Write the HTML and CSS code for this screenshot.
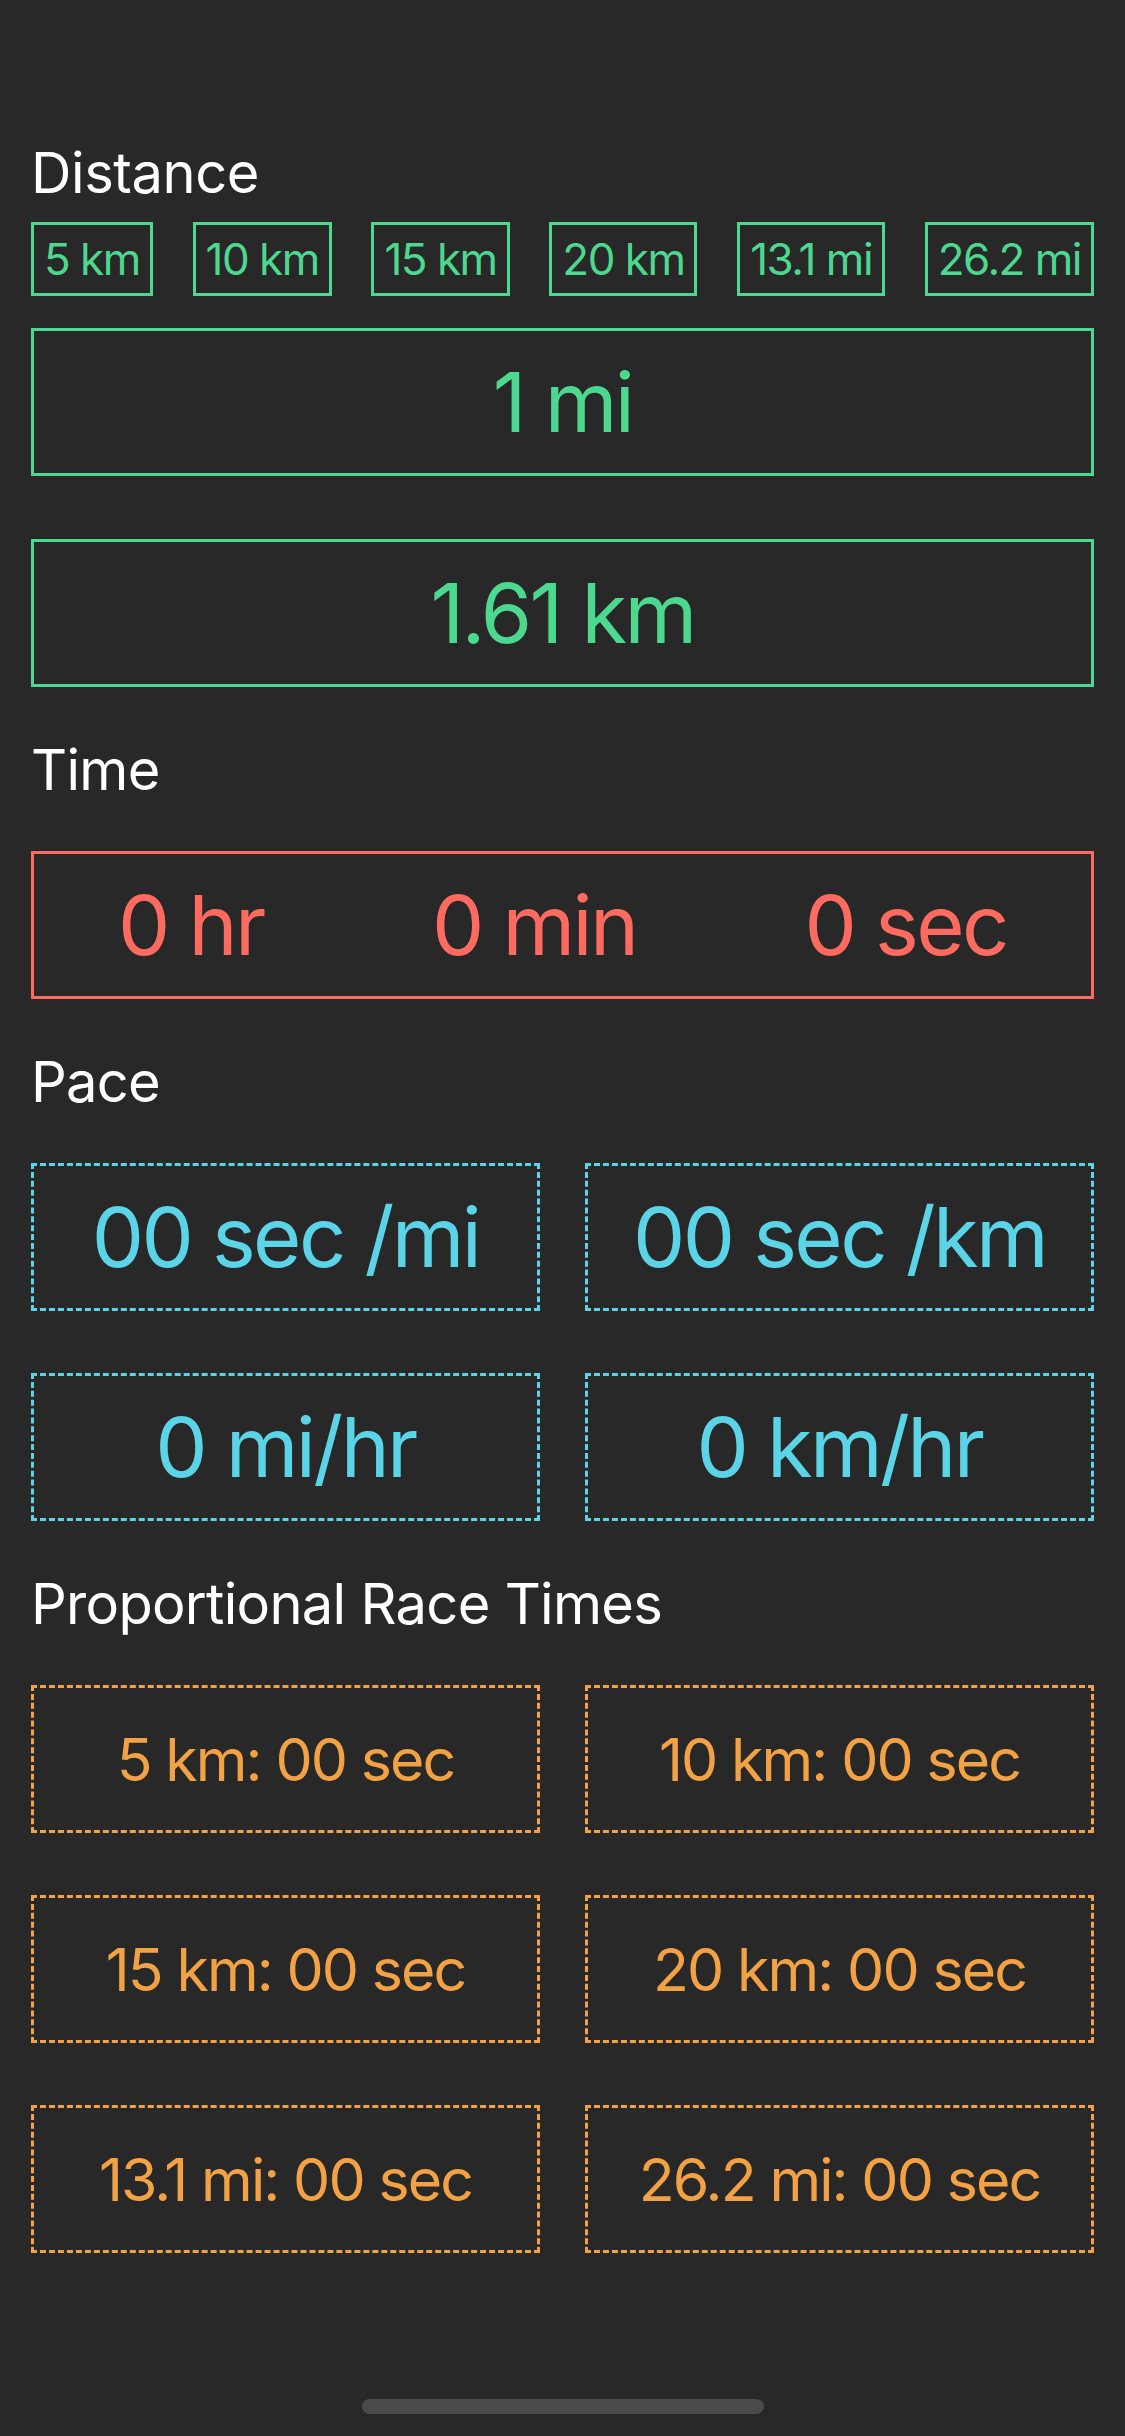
FILE: index.html
```html
<!DOCTYPE html>
<html lang="en">
<head>
<meta charset="utf-8">
<title>Pace Calculator</title>
<link rel="stylesheet" href="styles.css">
</head>
<body>
<main class="screen">
  <h2 class="label label-first">Distance</h2>
  <div class="chips">
    <div class="chip">5 km</div>
    <div class="chip">10 km</div>
    <div class="chip">15 km</div>
    <div class="chip">20 km</div>
    <div class="chip">13.1 mi</div>
    <div class="chip">26.2 mi</div>
  </div>
  <div class="stack">
    <div class="box green">1 mi</div>
    <div class="box green">1.61 km</div>
  </div>

  <h2 class="label">Time</h2>
  <div class="box red time">
    <span>0 hr</span>
    <span>0 min</span>
    <span>0 sec</span>
  </div>

  <h2 class="label">Pace</h2>
  <div class="grid">
    <div class="box dashed cyan">00 sec /mi</div>
    <div class="box dashed cyan">00 sec /km</div>
    <div class="box dashed cyan">0 mi/hr</div>
    <div class="box dashed cyan">0 km/hr</div>
  </div>

  <h2 class="label">Proportional Race Times</h2>
  <div class="grid race">
    <div class="box dashed orange">5 km: 00 sec</div>
    <div class="box dashed orange">10 km: 00 sec</div>
    <div class="box dashed orange">15 km: 00 sec</div>
    <div class="box dashed orange">20 km: 00 sec</div>
    <div class="box dashed orange">13.1 mi: 00 sec</div>
    <div class="box dashed orange">26.2 mi: 00 sec</div>
  </div>

  <div class="home-indicator"></div>
</main>
</body>
</html>
```

FILE: styles.css
```css
html, body {
  margin: 0;
  padding: 0;
  background: #282828;
}

body {
  font-family: Inter, "Noto Sans", Roboto, sans-serif;
  color: #ffffff;
  width: 1125px;
  height: 2436px;
  overflow: hidden;
}

.screen {
  display: flex;
  flex-direction: column;
  padding: 0 31px;
}

.label {
  margin: 55px 0 53px;
  font-size: 56px;
  line-height: 56px;
  font-weight: 400;
  color: #ffffff;
  letter-spacing: -0.7px;
}

.label-first {
  margin-top: 145px;
  margin-bottom: 21px;
  letter-spacing: -0.4px;
}

.chips {
  display: flex;
  justify-content: space-between;
  margin-bottom: 32px;
}

.chip {
  box-sizing: border-box;
  height: 74px;
  padding: 0 10px;
  border: 3px solid #4cd98f;
  color: #4cd98f;
  font-size: 44px;
  display: flex;
  align-items: center;
  justify-content: center;
  letter-spacing: -1.5px;
}

.stack {
  display: flex;
  flex-direction: column;
  gap: 63px;
}

.box {
  box-sizing: border-box;
  height: 148px;
  border: 3px solid currentColor;
  display: flex;
  align-items: center;
  justify-content: center;
  font-size: 83px;
  letter-spacing: -2.6px;
}

.dashed {
  border-style: dashed;
}

.green { color: #4cd98f; }
.red { color: #fd6a60; }
.cyan { color: #5cd4e7; }
.orange { color: #f2a244; }

.time {
  justify-content: space-around;
}

.grid {
  display: grid;
  grid-template-columns: 1fr 1fr;
  column-gap: 45px;
  row-gap: 62px;
}

.race .box {
  font-size: 59px;
  letter-spacing: -1.9px;
}

.home-indicator {
  align-self: center;
  width: 402px;
  height: 15px;
  border-radius: 8px;
  background: #4a4a4a;
  margin-top: 146px;
}
```
